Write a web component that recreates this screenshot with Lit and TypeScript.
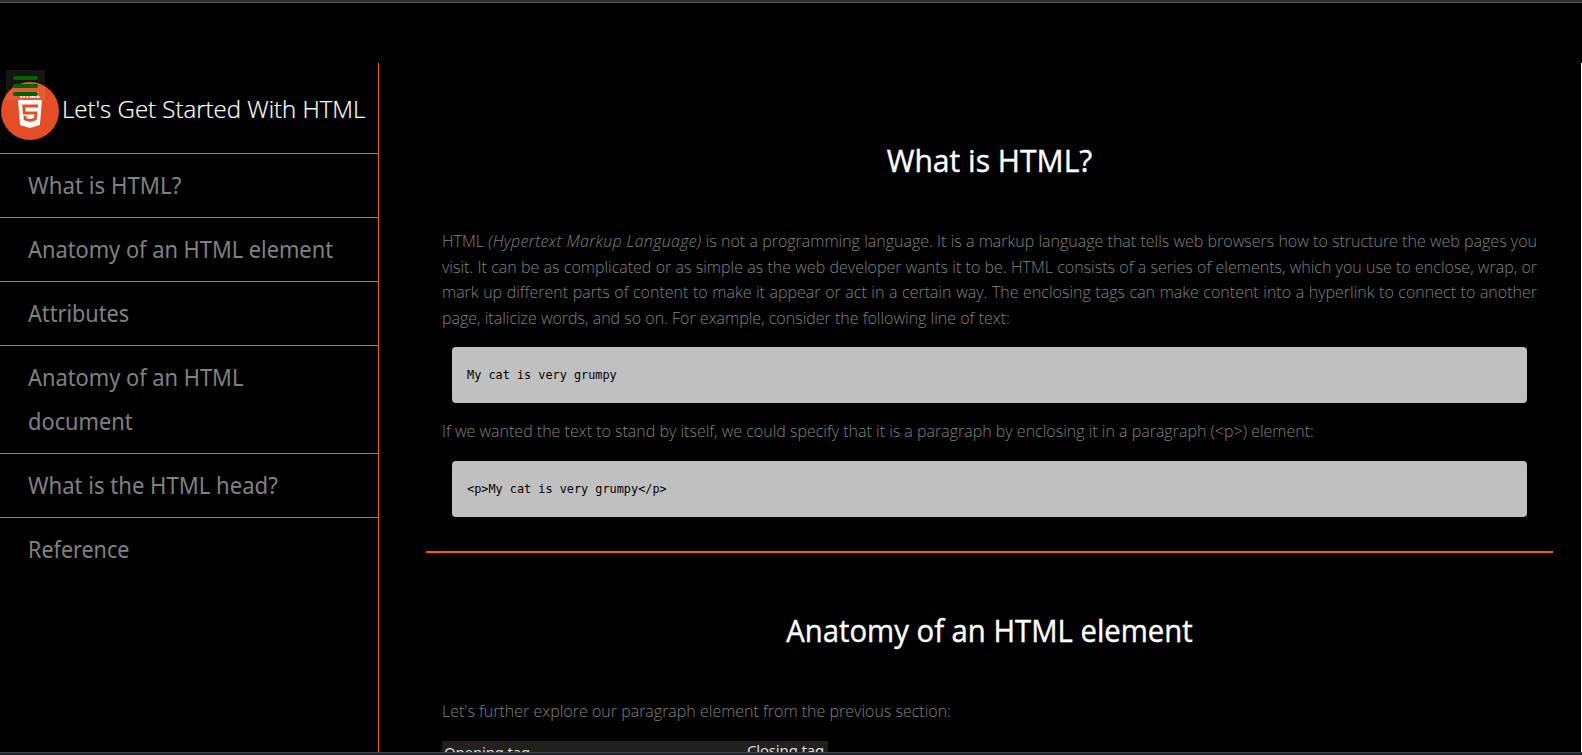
import { LitElement, html, css } from "lit";
import { customElement } from "lit/decorators.js";
import { styleMap } from "lit/directives/style-map.js";

// Each label carries the horizontal scale that condenses its glyphs.
const LINKS = [
  { label: "What is HTML?", scale: 0.968 },
  { label: "Anatomy of an HTML element", scale: 0.948 },
  { label: "Attributes", scale: 0.942 },
  { label: "Anatomy of an HTML document", scale: 0.949 },
  { label: "What is the HTML head?", scale: 0.96 },
  { label: "Reference", scale: 0.935 },
];

@customElement("doc-sidebar")
class DocSidebar extends LitElement {
  static styles = css`
    :host {
      display: block;
      position: relative;
      box-sizing: border-box;
      width: 379px;
      border-right: 1px solid #ff5a0a;
      font-family: "Open Sans", "Noto Sans", sans-serif;
    }
    .brand {
      display: flex;
      align-items: flex-start;
      box-sizing: border-box;
      height: 91px;
      padding: 19px 0 0 1px;
      border-bottom: 1px solid #ff5a0a;
    }
    .logo {
      display: block;
      flex: none;
      width: 58px;
      height: 58px;
    }
    .title {
      margin: -2px 0 0 3px;
      font-size: 24px;
      font-weight: 300;
      line-height: 58px;
      color: #fff;
      white-space: nowrap;
      -webkit-text-stroke: 0.2px #fff;
    }
    .menu {
      position: absolute;
      left: 6px;
      top: 7px;
      box-sizing: border-box;
      width: 39px;
      height: 30px;
      padding: 6px 7px 4px;
      background: rgba(235, 228, 210, 0.09);
      display: flex;
      flex-direction: column;
      gap: 4px;
    }
    .bar {
      flex: none;
      height: 4px;
      width: 25px;
      border-radius: 2px;
      background: #006400;
    }
    .list {
      margin: 0;
      padding: 0;
      list-style: none;
    }
    .item {
      padding: 9px 20px 10px 28px;
      border-bottom: 1px solid #ff5a0a;
      font-family: "Noto Sans", sans-serif;
      font-size: 23px;
      line-height: 44px;
      color: #808080;
    }
    .label {
      display: block;
      transform-origin: 0 0;
    }
    .item:last-child {
      border-bottom: 0;
    }
  `;
  render() {
    return html`
      <header class="brand">
        <svg class="logo" viewBox="0 0 58 58">
          <circle cx="29" cy="29" r="29" fill="#e44d26" />
          <text x="29" y="16" text-anchor="middle" textLength="20" lengthAdjust="spacingAndGlyphs" font-family="Open Sans" font-weight="800" font-size="8" fill="#fff">HTML</text>
          <path d="M17 18H41L38.9 43L29 46L19.1 43Z" fill="#fff" />
          <path d="M37 24H22.7L23.3 31H35L34.4 37L29 38.6L24.1 37L23.8 34" fill="none" stroke="#e44d26" stroke-width="2.8" />
        </svg>
        <h1 class="title">Let's Get Started With HTML</h1>
      </header>
      <div class="menu"><span class="bar"></span><span class="bar"></span><span class="bar"></span></div>
      <ul class="list">
        ${LINKS.map(
          (l) => html`<li class="item"><span class="label" style=${styleMap({ transform: `scaleX(${l.scale})` })}>${l.label}</span></li>`
        )}
      </ul>
    `;
  }
}

@customElement("app-root")
class AppRoot extends LitElement {
  static styles = css`
    :host {
      display: flex;
      flex-direction: column;
      box-sizing: border-box;
      width: 1582px;
      height: 755px;
      overflow: hidden;
      background: #000;
      font-family: "Open Sans", "Noto Sans", sans-serif;
    }
    .top {
      flex: none;
      height: 2px;
      background: #303030;
      border-bottom: 1px solid #5a5a5a;
    }
    .bottom {
      flex: none;
      height: 2px;
      background: #22262b;
      border-top: 1px solid #434248;
    }
    .body {
      flex: 1;
      min-height: 0;
      display: flex;
      margin-top: 60px;
    }
    .main {
      flex: 1;
      min-width: 0;
      overflow: hidden;
      border-right: 1px solid #f4f4ee;
      padding: 0 28px 0 47px;
    }
    .section {
      padding: 0 16px;
      border-bottom: 2px solid #ff5500;
      height: 488px;
    }
    .section + .section {
      height: 466px;
    }
    .heading {
      margin: 0;
      padding-top: 72px;
      font-family: "Open Sans", "Noto Sans", sans-serif;
      font-size: 31.5px;
      font-weight: 400;
      line-height: 50px;
      text-align: center;
      color: #fff;
      -webkit-text-stroke: 0.4px #fff;
      transform: scaleX(0.955);
    }
    .section + .section .heading {
      padding-top: 52px;
      transform: scaleX(0.93);
    }
    .text {
      margin: 44px 0 0;
      font-size: 16px;
      font-weight: 300;
      line-height: 25.6px;
      text-align: justify;
      color: #808080;
    }
    .term {
      letter-spacing: 0.32px;
    }
    .code + .text {
      margin-top: 16px;
    }
    .code {
      margin: 16px 10px 0;
      box-sizing: border-box;
      height: 56px;
      padding: 18px 15px;
      border-radius: 4px;
      background: #c0c0c0;
      color: #000;
      font-family: "DejaVu Sans Mono", monospace;
      font-size: 11.85px;
      line-height: 21px;
    }
    .figure {
      display: flex;
      justify-content: space-between;
      box-sizing: border-box;
      width: 386px;
      height: 200px;
      margin-top: 16px;
      padding: 0 4px 0 2px;
      background: #21201e;
      color: #ddd;
      font-family: "Noto Sans", sans-serif;
      font-size: 15px;
      line-height: 18px;
      letter-spacing: -0.17px;
    }
    .opening {
      padding-top: 2px;
    }
  `;
  render() {
    return html`
      <div class="top"></div>
      <div class="body">
        <doc-sidebar></doc-sidebar>
        <main class="main">
          <section class="section">
            <h2 class="heading">What is HTML?</h2>
            <p class="text">HTML <em class="term">(Hypertext Markup Language)</em> is not a programming language. It is a markup language that tells web browsers how to structure the web pages you visit. It can be as complicated or as simple as the web developer wants it to be. HTML consists of a series of elements, which you use to enclose, wrap, or mark up different parts of content to make it appear or act in a certain way. The enclosing tags can make content into a hyperlink to connect to another page, italicize words, and so on. For example, consider the following line of text:</p>
            <div class="code">My cat is very grumpy</div>
            <p class="text">If we wanted the text to stand by itself, we could specify that it is a paragraph by enclosing it in a paragraph (&lt;p&gt;) element:</p>
            <div class="code">&lt;p&gt;My cat is very grumpy&lt;/p&gt;</div>
          </section>
          <section class="section">
            <h2 class="heading">Anatomy of an HTML element</h2>
            <p class="text">Let's further explore our paragraph element from the previous section:</p>
            <div class="figure"><span class="opening">Opening tag</span><span class="closing">Closing tag</span></div>
          </section>
        </main>
      </div>
      <div class="bottom"></div>
    `;
  }
}
